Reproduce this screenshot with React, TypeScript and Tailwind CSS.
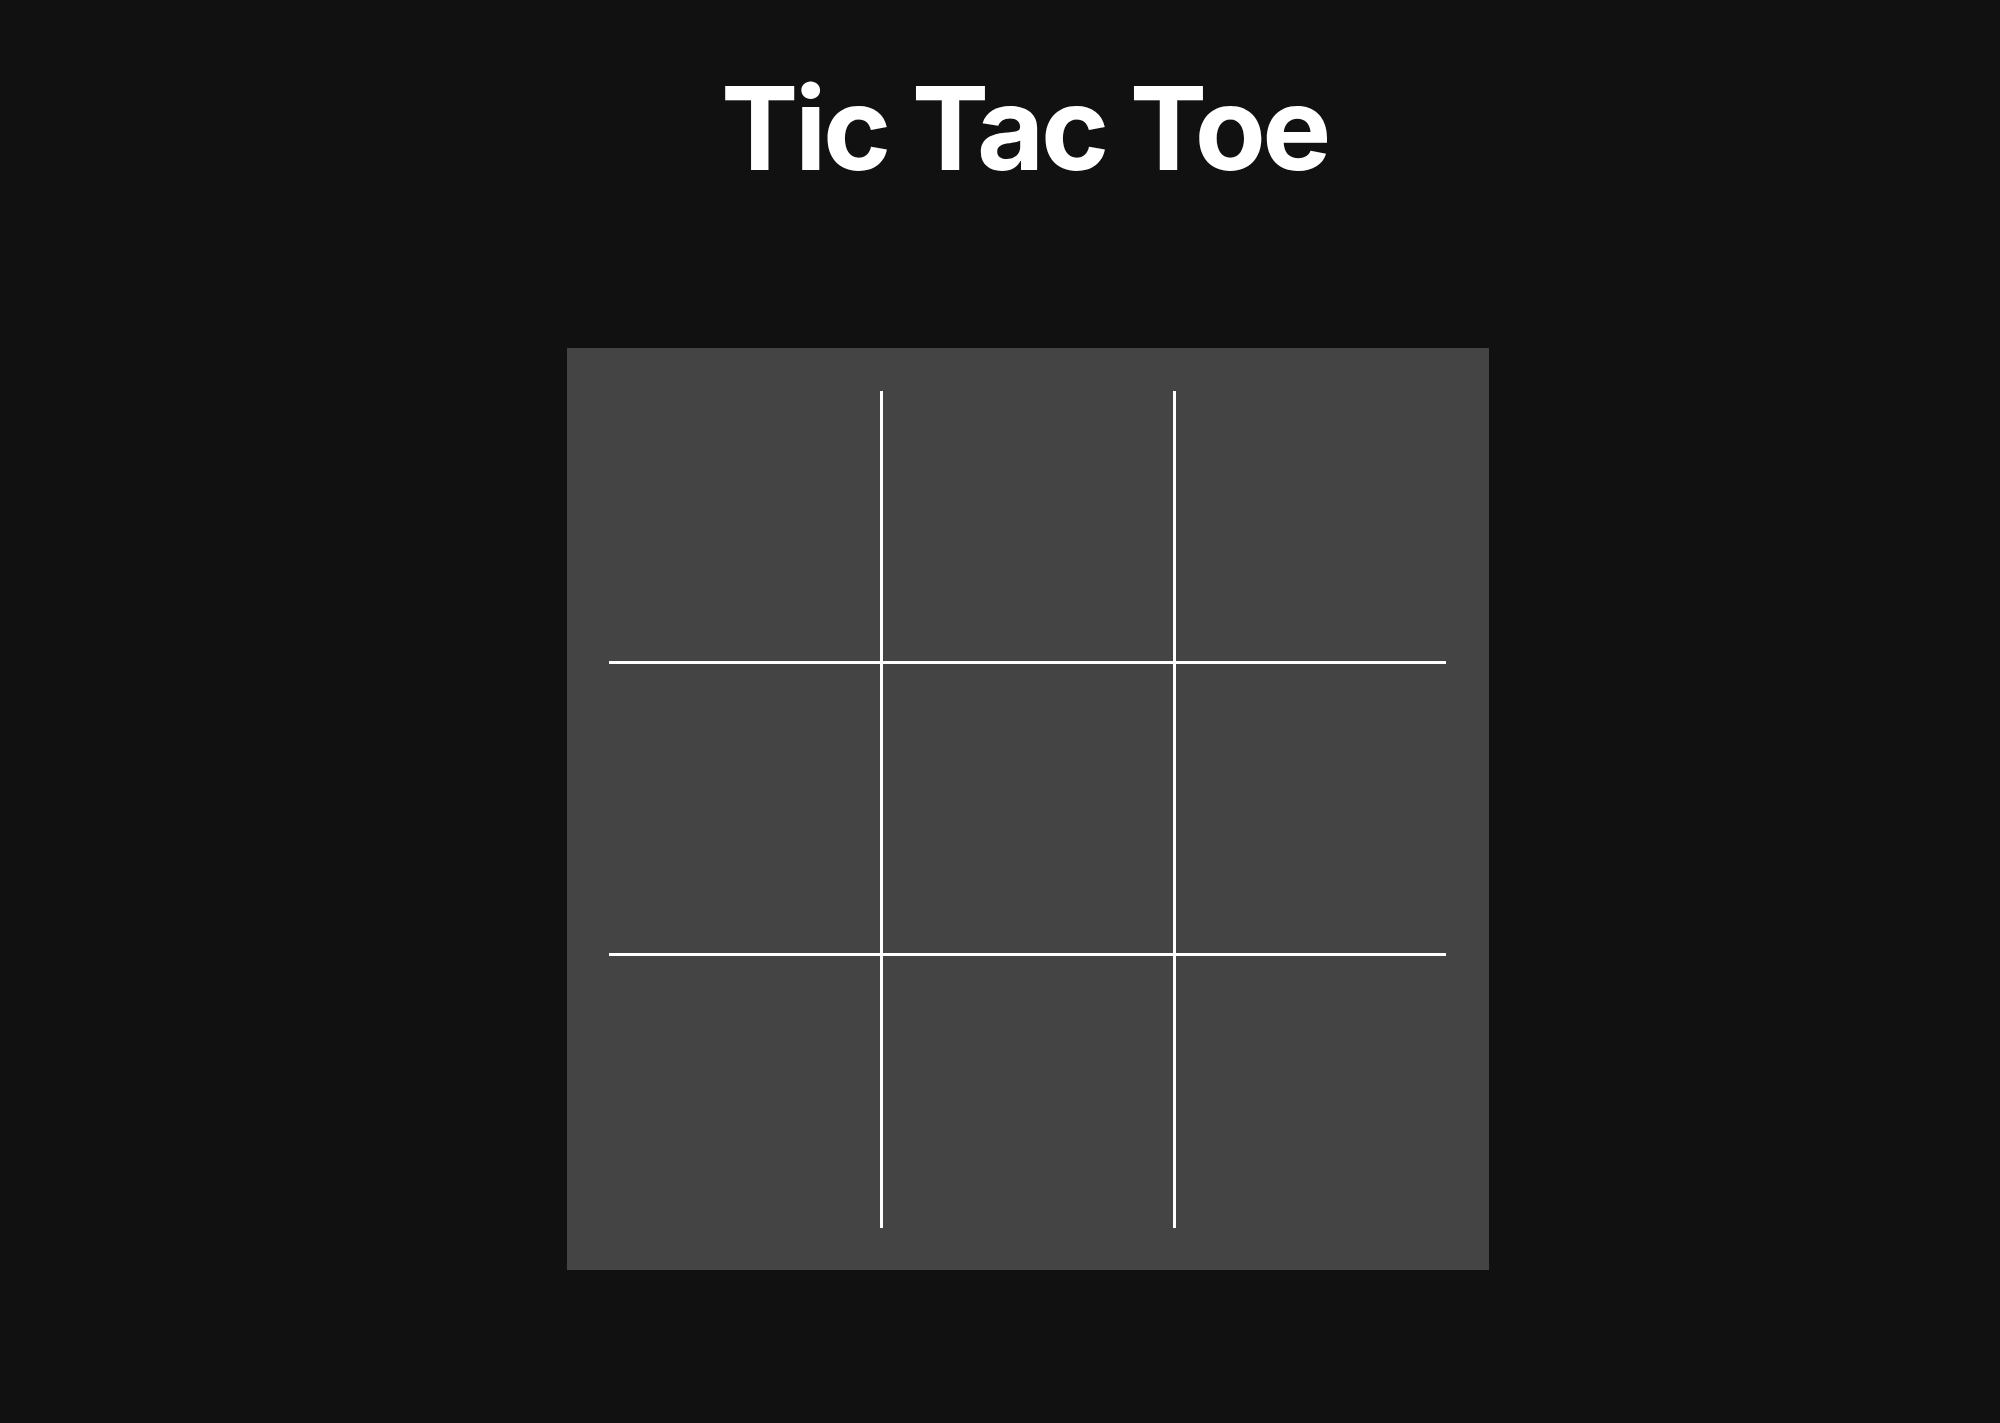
const rows = [0, 1, 2];
const cols = [0, 1, 2];

function Cell({ r, c }: { r: number; c: number }) {
  const w = c === 0 ? "w-[274px] border-r-[3px]" : c === 1 ? "w-[293px] border-r-[3px]" : "w-[270px]";
  const h = r === 0 ? "h-[273px] border-b-[3px]" : r === 1 ? "h-[292px] border-b-[3px]" : "h-[272px]";
  return <div className={`${w} ${h} border-white`} />;
}

export default function App() {
  return (
    <div className="min-h-[1423px] w-full bg-[#111111] font-['Inter','Liberation_Sans',sans-serif]">
      <div className="flex flex-col items-start">
        <h1 className="ml-[721px] mt-[58px] text-[116px] font-bold leading-[140px] tracking-[-0.03em] text-white">
          Tic Tac Toe
        </h1>
        <div className="ml-[567px] mt-[150px] w-[922px] h-[922px] bg-[#444444] pl-[42px] pt-[43px]">
          {rows.map((r) => (
            <div key={r} className="flex">
              {cols.map((c) => (
                <Cell key={c} r={r} c={c} />
              ))}
            </div>
          ))}
        </div>
      </div>
    </div>
  );
}
